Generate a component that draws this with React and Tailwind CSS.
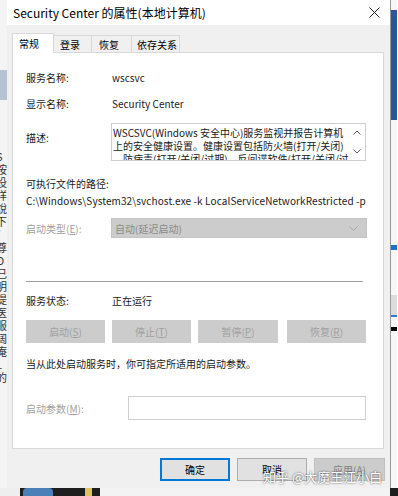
export default function App() {
  const leftChars = ['S', '按', '设', '样', '說', '下', '/', '尊', 'O', '己', '明', '提', '医', '服', '阔', '庵', 'L', '的'];

  return (
    <div className="w-[398px] h-[496px] overflow-hidden bg-white font-['Noto_Sans_CJK_SC',sans-serif] text-[10px] leading-[13px] text-[#1a1a1a]">
      <div className="flex h-[488px]">
        {/* background window, left edge */}
        <div className="w-[7px] flex flex-col overflow-hidden bg-[#f4f4f4]">
          <div className="h-[70px]" />
          <div className="h-[30px] bg-[#b4c2d3]" />
          <div className="h-[6px]" />
          <div className="flex flex-col gap-[1px] -ml-[4px] mt-[44px] text-[11px] leading-[12px] text-[#333]">
            {leftChars.map((c, i) => (
              <span key={i}>{c}</span>
            ))}
          </div>
        </div>

        {/* dialog */}
        <div className="relative w-[384px] flex flex-col bg-[#f0f0f0] border-r border-[#9a9a9a]">
          <div className="h-[25px] bg-white flex items-center justify-between pl-[6px] pr-[8px]">
            <span className="text-[12px] text-black">Security Center 的属性(本地计算机)</span>
            <svg width="11" height="11" viewBox="0 0 11 11" className="mr-[2px]">
              <path d="M0.5 0.5 L10.5 10.5 M10.5 0.5 L0.5 10.5" stroke="#222" strokeWidth="1" />
            </svg>
          </div>

          {/* tabs */}
          <div className="flex items-end ml-[5px] mt-[8px] h-[20px] text-black">
            <div className="relative z-10 h-[20px] w-[42px] bg-white border border-b-0 border-[#d9d9d9] pl-[6px] pt-[3px]">常规</div>
            <div className="h-[18px] w-[38px] border-t border-r border-[#d9d9d9] pl-[6px] pt-[2px]">登录</div>
            <div className="h-[18px] w-[40px] border-t border-r border-[#d9d9d9] pl-[7px] pt-[2px]">恢复</div>
            <div className="h-[18px] w-[48px] border-t border-r border-[#d9d9d9] pl-[5px] pt-[2px]">依存关系</div>
          </div>

          {/* tab panel */}
          <div className="ml-[5px] w-[372px] h-[397px] -mt-[1px] bg-white border border-[#d9d9d9] pl-[13px] flex flex-col">
            <div className="mt-[15px] h-[18px] flex items-center">
              <span className="w-[86px]">服务名称:</span>
              <span>wscsvc</span>
            </div>
            <div className="mt-[8px] h-[18px] flex items-center">
              <span className="w-[86px]">显示名称:</span>
              <span>Security Center</span>
            </div>
            <div className="mt-[11px] h-[38px] flex items-start">
              <span className="w-[85px] pt-[8px]">描述:</span>
              <div className="w-[255px] h-[38px] border border-[#cfcfcf] flex overflow-hidden">
                <div className="flex-1 pl-[1px] pt-[2px] overflow-hidden whitespace-nowrap">
                  <div>WSCSVC(Windows 安全中心)服务监视并报告计算机</div>
                  <div>上的安全健康设置。健康设置包括防火墙(打开/关闭)</div>
                  <div>、防病毒(打开/关闭/过期)、反间谍软件(打开/关闭/过期)</div>
                </div>
                <div className="w-[16px] flex flex-col items-center justify-between py-[6px]">
                  <svg width="8" height="5" viewBox="0 0 8 5">
                    <path d="M0.5 4.5 L4 1 L7.5 4.5" stroke="#555" strokeWidth="1" fill="none" />
                  </svg>
                  <svg width="8" height="5" viewBox="0 0 8 5">
                    <path d="M0.5 0.5 L4 4 L7.5 0.5" stroke="#555" strokeWidth="1" fill="none" />
                  </svg>
                </div>
              </div>
            </div>
            <div className="mt-[14px] h-[16px] flex items-center">可执行文件的路径:</div>
            <div className="h-[18px] flex items-center whitespace-nowrap tracking-[0.1px]">C:\Windows\System32\svchost.exe -k LocalServiceNetworkRestricted -p</div>
            <div className="mt-[9px] h-[20px] flex items-center">
              <span className="w-[85px] text-[#a0a0a0]">启动类型(<span className="underline">E</span>):</span>
              <div className="w-[256px] h-[20px] bg-[#cccccc] border border-[#c4c4c4] flex items-center justify-between pl-[3px] pr-[8px] text-[#8a8a8a]">
                <span>自动(延迟启动)</span>
                <svg width="9" height="5" viewBox="0 0 9 5">
                  <path d="M0.5 0.5 L4.5 4.5 L8.5 0.5" stroke="#a8a8a8" strokeWidth="1" fill="none" />
                </svg>
              </div>
            </div>
            <div className="mt-[43px] h-[1px] w-[337px] bg-[#a0a0a0]" />
            <div className="mt-[9px] h-[18px] flex items-center">
              <span className="w-[86px]">服务状态:</span>
              <span>正在运行</span>
            </div>
            <div className="mt-[11px] flex text-[#a0a0a0]">
              <div className="w-[79px] h-[23px] bg-[#cccccc] flex items-center justify-center">启动(<span className="underline">S</span>)</div>
              <div className="ml-[7px] w-[79px] h-[23px] bg-[#cccccc] flex items-center justify-center">停止(<span className="underline">T</span>)</div>
              <div className="ml-[7px] w-[80px] h-[23px] bg-[#cccccc] flex items-center justify-center">暂停(<span className="underline">P</span>)</div>
              <div className="ml-[9px] w-[79px] h-[23px] bg-[#cccccc] flex items-center justify-center">恢复(<span className="underline">R</span>)</div>
            </div>
            <div className="mt-[11px] h-[18px] flex items-center">当从此处启动服务时，你可指定所适用的启动参数。</div>
            <div className="mt-[24px] h-[24px] flex items-center">
              <span className="w-[102px] text-[#a0a0a0]">启动参数(<span className="underline">M</span>):</span>
              <div className="w-[238px] h-[24px] bg-white border border-[#d0d0d0]" />
            </div>
          </div>

          {/* dialog buttons */}
          <div className="mt-[9px] flex justify-end pr-[5px] text-black">
            <div className="w-[70px] h-[23px] bg-[#e1e1e1] border-2 border-[#0078d7] flex items-center justify-center">确定</div>
            <div className="ml-[7px] w-[70px] h-[23px] bg-[#e1e1e1] border border-[#adadad] flex items-center justify-center">取消</div>
            <div className="ml-[7px] w-[71px] h-[23px] bg-[#cccccc] border border-[#bfbfbf] flex items-center justify-center text-[#838383]">应用(<span className="underline">A</span>)</div>
          </div>

          {/* watermark */}
          <div className="absolute left-[256px] top-[469px] text-[13px] leading-[16px] text-white [text-shadow:0_0_2px_rgba(0,0,0,0.8)] whitespace-nowrap">
            知乎 @大魔王江小白
          </div>
        </div>

        {/* background window, right edge */}
        <div className="w-[6px] flex flex-col overflow-hidden bg-[#f7f7f7]">
          <div className="h-[10px]" />
          <div className="h-[110px] bg-[#2b5797]" />
          <div className="h-[125px]" />
          <div className="h-[5px] bg-[#1a73c8]" />
          <div className="h-[45px]" />
          <div className="h-[20px] bg-[#dcdcdc]" />
          <div className="h-[2px] bg-[#2f7ad6]" />
          <div className="h-[10px]" />
          <div className="h-[4px] bg-black" />
        </div>
      </div>

      {/* background taskbar strip */}
      <div className="h-[8px] flex items-center bg-[#1e1e1e]">
        <div className="w-[20px] h-full bg-[#eeeeee]" />
        <div className="ml-[3px] w-[30px] h-full bg-[#4a7fb8] rounded-t-[4px]" />
        <div className="ml-[32px] w-[7px] h-full bg-[#e0c060]" />
        <div className="ml-[8px] w-[290px] h-full bg-[#f3f3f3]" />
      </div>
    </div>
  );
}
